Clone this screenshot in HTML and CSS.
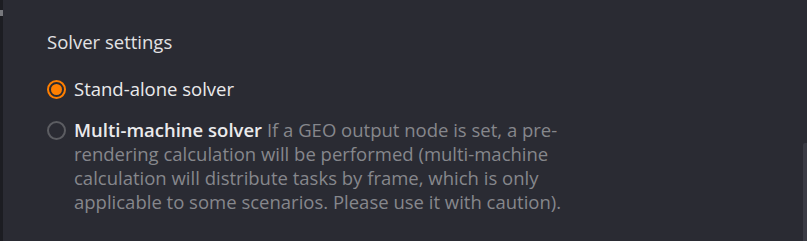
FILE: index.html
```html
<!DOCTYPE html>
<html lang="en">
<head>
    <meta charset="UTF-8">
    <title>Solver settings</title>
    <link rel="stylesheet" href="styles.css">
</head>
<body>
    <div class="edge"><span class="edge-mark"></span></div>
    <div class="panel">
        <h3 class="title">Solver settings</h3>
        <label class="option">
            <input type="radio" name="solver" checked>
            <span class="radio"></span>
            <span class="text"><b>Stand-alone solver</b></span>
        </label>
        <label class="option">
            <input type="radio" name="solver">
            <span class="radio"></span>
            <span class="text"><b>Multi-machine solver</b> <span class="hint">If a GEO output node is set, a pre-rendering calculation will be performed (multi-machine calculation will distribute tasks by frame, which is only applicable to some scenarios. Please use it with caution).</span></span>
        </label>
    </div>
    <div class="scrollbar"></div>
</body>
</html>
```

FILE: styles.css
```css
body {
    margin: 0;
    height: 241px;
    overflow: hidden;
    background-color: #2a2b33;
    font-family: "Open Sans", "Noto Sans", sans-serif;
    display: flex;
}
.edge {
    width: 3px;
    background-color: #1c1d22;
    position: relative;
}
.edge-mark {
    position: absolute;
    top: 10px;
    left: 0;
    width: 3px;
    height: 6px;
    background-color: #77787d;
}
.panel {
    flex: 1;
    padding: 30px 0 0 44px;
}
.title {
    margin: 0 0 23px;
    font-size: 18.5px;
    font-weight: normal;
    color: #e2e2e4;
    line-height: 24px;
}
.option {
    display: flex;
    align-items: flex-start;
    margin-bottom: 17px;
    cursor: pointer;
}
.option input {
    display: none;
}
.radio {
    flex: none;
    width: 15px;
    height: 15px;
    margin: 3px 8px 0 0;
    border: 2px solid #5c5d62;
    border-radius: 50%;
    position: relative;
}
.option input:checked + .radio {
    border-color: #ff7f00;
}
.option input:checked + .radio::after {
    content: "";
    position: absolute;
    top: 2px;
    left: 2px;
    width: 11px;
    height: 11px;
    border-radius: 50%;
    background-color: #ff7f00;
}
.text {
    width: 495px;
    font-size: 18.5px;
    line-height: 24px;
    color: #eaeaec;
}
.text b {
    font-weight: 600;
}
.option input:checked ~ .text b {
    font-weight: normal;
}
.hint {
    color: #86878c;
}
.scrollbar {
    width: 4px;
    margin-top: 143px;
    background-color: #3a3b44;
    border-radius: 2px 0 0 0;
}
```
